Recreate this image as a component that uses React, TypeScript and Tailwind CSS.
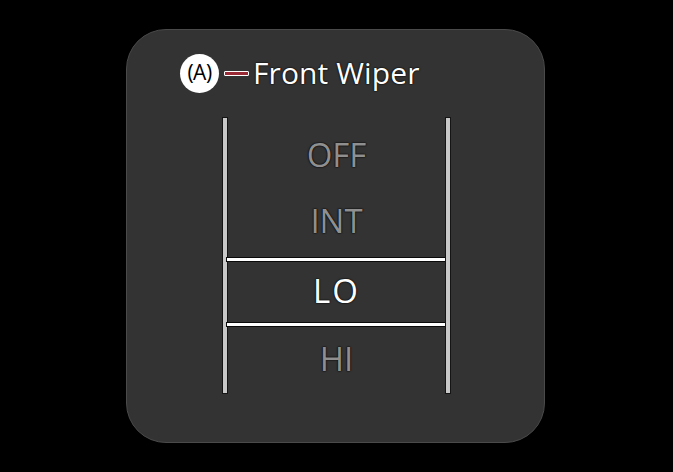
export default function App() {
  const outline = "[text-shadow:0_0_2px_#0a0a0a,0_0_1px_#0a0a0a,0_0_1px_#0a0a0a]";
  return (
    <div className="w-[673px] h-[472px] bg-black pt-[29px] pl-[126px] font-['Open_Sans',sans-serif]">
      <div className="w-[419px] h-[414px] rounded-[40px] bg-[#333333] border border-[#4a4a4a] pt-[24px] flex flex-col">
        <div className="flex items-center ml-[53px] h-[38px]">
          <div className="w-[39px] h-[39px] rounded-full bg-white flex items-center justify-center text-black text-[21px] leading-none tracking-[-0.5px] pb-[1px]">
            (A)
          </div>
          <div className="ml-[5px] w-[25px] h-[5px] bg-[#9a2a35] border border-white rounded-[1px]" />
          <div className={`ml-[4px] text-white text-[30px] font-medium leading-none tracking-[0.1px] ${outline}`}>
            Front Wiper
          </div>
        </div>
        <div className="flex ml-[96px] mt-[26px] h-[275px]">
          <div className="w-[4px] bg-[#c8c8c8] shadow-[0_0_0_1px_#151515]" />
          <div className="w-[219px] flex flex-col">
            <div className="pt-[3px] h-[140px] flex flex-col">
              <div className={`h-[66px] flex items-center justify-center text-[#8f8f8f] text-[33px] leading-none ${outline}`}>OFF</div>
              <div className={`h-[66px] flex items-center justify-center text-[#8f8f8f] text-[33px] leading-none ${outline}`}>INT</div>
            </div>
            <div className="h-[3px] bg-white shadow-[0_0_0_1px_#0a0a0a]" />
            <div className={`h-[62px] pb-[4px] flex items-center justify-center text-white text-[33px] font-medium leading-none tracking-[2px] ${outline}`}>LO</div>
            <div className="h-[3px] bg-white shadow-[0_0_0_1px_#0a0a0a]" />
            <div className={`h-[67px] pb-[2px] flex items-center justify-center text-[#8f8f8f] text-[33px] leading-none ${outline}`}>HI</div>
          </div>
          <div className="w-[4px] bg-[#c8c8c8] shadow-[0_0_0_1px_#151515]" />
        </div>
      </div>
    </div>
  );
}
